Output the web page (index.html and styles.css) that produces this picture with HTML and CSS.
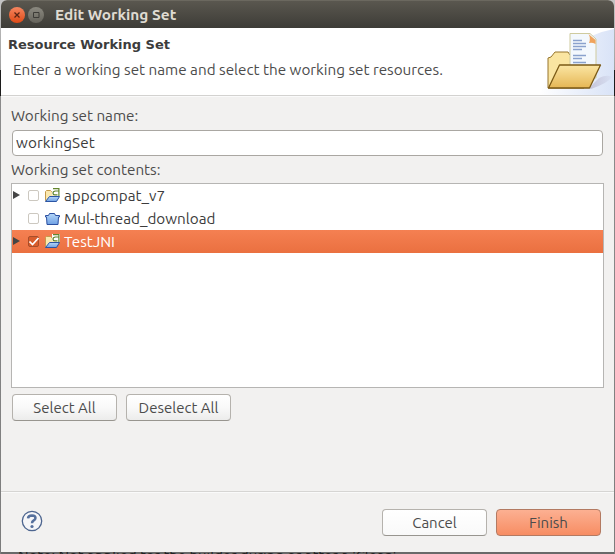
FILE: index.html
```html
<!DOCTYPE html>
<html lang="en">
<head>
    <meta charset="UTF-8">
    <title>Edit Working Set</title>
    <link rel="stylesheet" href="styles.css">
</head>
<body>
    <!-- icons used more than once -->
    <svg class="defs" width="0" height="0">
        <defs>
            <linearGradient id="blueFill" x1="0" y1="0" x2="0" y2="1">
                <stop offset="0" stop-color="#b5d7f8"/>
                <stop offset="1" stop-color="#6fa0e4"/>
            </linearGradient>
            <linearGradient id="goldFill" x1="0" y1="0" x2="0" y2="1">
                <stop offset="0" stop-color="#fbe6a4"/>
                <stop offset="1" stop-color="#e5b654"/>
            </linearGradient>
            <symbol id="project" viewBox="0 0 16 16">
                <path d="M1.5 12.5V3.5L2.5 2.5H6.5L7.5 3.5H12.5V12.5Z" fill="#fbe8ae" stroke="#c49a4c"/>
                <path d="M1.5 13.5L5.5 8.5H15.5L12.5 13.5Z" fill="url(#blueFill)" stroke="#2b55a4"/>
                <path d="M8 0H16V8H12L8 7Z" fill="#fff"/>
                <path d="M9 .6H14.9V8M14.9 3H11.500Q9 3.200 9 5Q9 6.900 11 6.900H13.500" fill="none" stroke="#63852d" stroke-width="1.200"/>
            </symbol>
        </defs>
    </svg>

    <div class="window">
        <div class="titlebar">
            <span class="win-btn close">
                <svg width="16" height="16" viewBox="0 0 16 16"><path d="M5.5 5.5L10.5 10.5M10.5 5.5L5.5 10.5" stroke="#5a2413" stroke-width="1.3"/></svg>
            </span>
            <span class="win-btn maximize">
                <svg width="16" height="16" viewBox="0 0 16 16"><path d="M5.5 5.5H11V10.5H5.5Z" fill="none" stroke="#3c3b37"/></svg>
            </span>
            <span class="title">Edit Working Set</span>
        </div>

        <div class="header">
            <div class="header-text">
                <h1>Resource Working Set</h1>
                <p>Enter a working set name and select the working set resources.</p>
            </div>
            <svg class="banner" width="75" height="67" viewBox="0 0 75 67">
                <defs>
                    <linearGradient id="bannerFill" x1="0" y1="0" x2="1" y2="0">
                        <stop offset="0" stop-color="#fff"/>
                        <stop offset="1" stop-color="#d9e3f7"/>
                    </linearGradient>
                    <linearGradient id="shadowFill" x1="0" y1="0" x2="1" y2="0">
                        <stop offset="0" stop-color="#a59db8"/>
                        <stop offset="1" stop-color="#d5dcf0"/>
                    </linearGradient>
                </defs>
                <path d="M0 67Q24 10 75 1V67Z" fill="url(#bannerFill)"/>
                <path d="M50 60L60 50Q68 46 73 49Q69 55 52 61Z" fill="url(#shadowFill)" opacity=".5"/>
                <path d="M9 60V30L12 29L16 24H29L31 27H45V60Z" fill="#fae5a1" stroke="#96752c"/>
                <path d="M31 5.500H51L57 11V50H31Z" fill="#f3f8fd" stroke="#cfcb9e"/>
                <path d="M49.500 6L56.500 12V16Q53 14 50 15Q52 10 49.500 6Z" fill="#f0a35c"/>
                <path d="M34 12.500H43M34 15.500H47M34 18.500H47M34 21.500H43M34 27.500H47M34 30.500H43M34 34.500H47" stroke="#8aa2cd" stroke-width="1.300"/>
                <path d="M9.500 60L20.500 37H61.500L50.500 60Z" fill="url(#goldFill)" stroke="#7b5a16" stroke-width="1.300" stroke-linejoin="round"/>
            </svg>
        </div>

        <div class="content">
            <label class="name-label" for="setName">Working set name:</label>
            <input type="text" id="setName" value="workingSet">
            <div class="contents-label">Working set contents:</div>

            <div class="tree">
                <div class="row">
                    <span class="arrow"></span>
                    <span class="check"></span>
                    <svg width="16" height="16"><use href="#project"/></svg>
                    <span class="label">appcompat_v7</span>
                </div>
                <div class="row">
                    <span class="arrow none"></span>
                    <span class="check"></span>
                    <svg width="16" height="16" viewBox="0 0 16 16"><path d="M1.5 4.5H4.5L5.5 2.5H10.5L11.5 4.5H15.5V6H14.5L14 13.5H3L2.5 6H1.5Z" fill="url(#blueFill)" stroke="#2b4fa0"/></svg>
                    <span class="label">Mul-thread_download</span>
                </div>
                <div class="row selected">
                    <span class="arrow"></span>
                    <span class="check">
                        <svg width="12" height="11" viewBox="0 0 12 11"><path d="M1.5 5.5L4.5 8.5L10.5 2" fill="none" stroke="#fff" stroke-width="1.7"/></svg>
                    </span>
                    <svg width="16" height="16"><use href="#project"/></svg>
                    <span class="label">TestJNI</span>
                </div>
            </div>

            <div class="tree-actions">
                <button>Select All</button>
                <button>Deselect All</button>
            </div>
        </div>

        <div class="footer">
            <svg class="help" width="22" height="22" viewBox="0 0 22 22">
                <circle cx="11" cy="11" r="9.7" fill="#f6f6f8" stroke="#4d658f" stroke-width="1.3"/>
                <path d="M7 8.300Q7.200 5.400 11 5.400Q14.500 5.500 14.500 8Q14.500 9.500 12.500 10.600Q11 11.500 11 13.300" fill="none" stroke="#56709d" stroke-width="2.500"/>
                <circle cx="11" cy="16.500" r="1.600" fill="#56709d"/>
            </svg>
            <div class="footer-actions">
                <button class="cancel">Cancel</button>
                <button class="finish">Finish</button>
            </div>
        </div>
    </div>
    <div class="behind">Note: Not applied for the builder during or after a 'Clean'</div>
</body>
</html>
```
FILE: styles.css
```css
* {
    box-sizing: border-box;
}

body {
    margin: 0;
    width: 615px;
    height: 554px;
    padding: 0 1px;
    overflow: hidden;
    background: linear-gradient(#c4c4c4, #a0a0a0 70px, #1c1c1c 70px, #1c1c1c 96px, #8c8c8c 96px, #7c7c7c);
    font-family: Ubuntu, "Noto Sans", sans-serif;
    font-size: 15.24px;
    color: #4c4c4c;
}

.defs {
    display: block;
}

.window {
    height: 552px;
    display: flex;
    flex-direction: column;
    background: #f2f1f0;
    border-radius: 6px 6px 0 0;
    overflow: hidden;
}

.titlebar {
    height: 28px;
    flex: none;
    display: flex;
    align-items: center;
    padding: 0 0 0 8px;
    background: linear-gradient(#5a574f, #3d3c37);
    border-top: 1px solid #6b685f;
}

.win-btn {
    width: 16px;
    height: 16px;
    margin-right: 3px;
    border-radius: 50%;
}

.win-btn svg {
    display: block;
}

.close {
    background: linear-gradient(#f58660, #df4a16);
}

.maximize {
    background: linear-gradient(#8b8980, #65635b);
}

.title {
    margin-left: 8px;
    font-size: 15.4px;
    font-weight: bold;
    color: #dfdbd2;
}

.header {
    height: 68px;
    flex: none;
    display: flex;
    justify-content: space-between;
    background: #fff;
    border-bottom: 1px solid #d3d2d0;
}

.header-text {
    padding: 8px 0 0 7px;
    white-space: nowrap;
}

.header h1 {
    margin: 0;
    font: bold 13px/18px "DejaVu Sans", sans-serif;
    color: #3c3c3c;
}

.header p {
    margin: 6px 0 0 5px;
    line-height: 20px;
}

.content {
    flex: 1;
    padding: 9px 10px 0 10px;
    border-top: 1px solid #fafafa;
}

.name-label,
.contents-label {
    display: block;
    height: 20px;
    line-height: 20px;
}

#setName {
    display: block;
    width: 591px;
    height: 26px;
    margin: 4px 0 4px 1px;
    padding: 0 3px 2px;
    border: 1px solid #aaa7a2;
    border-radius: 4px;
    background: #fff;
    font: inherit;
    letter-spacing: 0.1px;
    color: #3c3c3c;
    outline: none;
}

.contents-label {
    margin-bottom: 3px;
}

.tree {
    height: 205px;
    border: 1px solid #b6b5b3;
    background: #fff;
    color: #3c3c3c;
}

.row {
    height: 23px;
    display: flex;
    align-items: center;
}

.row svg {
    display: block;
}

.arrow {
    width: 7px;
    height: 8px;
    margin: 0 8px 1px 1px;
    background: #454545;
    clip-path: polygon(0 0, 100% 50%, 0 100%);
}

.arrow.none {
    visibility: hidden;
}

.check {
    width: 11px;
    height: 11px;
    margin-right: 5px;
    border: 1px solid #ccc8c0;
    border-radius: 2px;
    background: #fff;
}

.label {
    margin-left: 4px;
}

.selected {
    background: linear-gradient(#f58052, #ea7040);
    color: #fff;
}

.selected .check {
    background: #d95d2c;
    border-color: #a84e2a;
}

.selected .check svg {
    margin: -1px;
}

.tree-actions {
    display: flex;
    gap: 9px;
    padding: 6px 0 0 1px;
}

button {
    width: 105px;
    height: 27px;
    padding: 0;
    border: 1px solid #b5b2ad;
    border-bottom-color: #98958f;
    border-radius: 4px;
    background: linear-gradient(#fff, #f9f9f9 50%, #ececeb);
    font: inherit;
    font-size: 15px;
    line-height: 24px;
    color: #4c4c4c;
}

.footer {
    height: 61px;
    flex: none;
    display: flex;
    justify-content: space-between;
    align-items: center;
    padding: 0 13px 2px 20px;
    border-top: 1px solid #d6d5d3;
    box-shadow: inset 0 1px #fafafa;
}

.footer-actions {
    display: flex;
    gap: 9px;
    margin-top: 2px;
}

.footer-actions button {
    padding-top: 1px;
}

.cancel {
    background: linear-gradient(#fff, #f9f9f9);
}

.finish {
    border-color: #b37a62;
    background: linear-gradient(#fcb092, #f78d63);
}

/* window lying below the dialog, only its top edge shows */
.behind {
    height: 2px;
    padding-left: 17px;
    font-size: 14.9px;
    line-height: 7px;
    overflow: hidden;
    white-space: nowrap;
    background: #696969;
    color: #222;
}
```
